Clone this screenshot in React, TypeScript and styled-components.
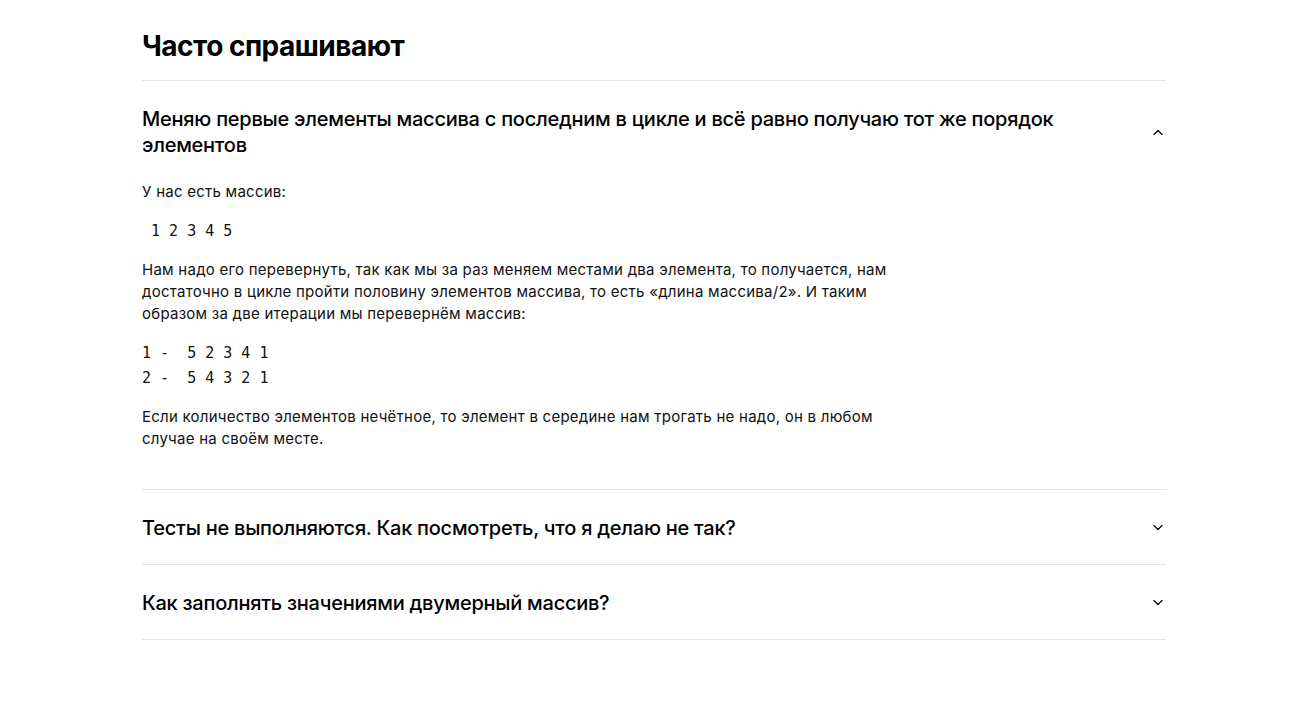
import React, { useState } from 'react'
import styled, { createGlobalStyle } from 'styled-components'

const GlobalStyle = createGlobalStyle`
  body {
    margin: 0;
    padding-left: 7px;
    background: #fff;
    color: #000;
    font-family: 'Inter', 'Roboto', sans-serif;
  }
`

const Container = styled.section`
  max-width: 1024px;
  margin: 0 auto;
  padding-top: 28px;
`

const Title = styled.h2`
  margin: 0;
  padding-bottom: 16px;
  font-size: 28px;
  line-height: 36px;
  font-weight: 700;
  letter-spacing: -0.5px;
  border-bottom: 1px solid #e6e6e6;
`

const List = styled.div``

const Row = styled.div`
  border-bottom: 1px solid #e6e6e6;
`

const Question = styled.div`
  display: flex;
  align-items: center;
  justify-content: space-between;
  gap: 40px;
  padding: 25px 0 23px;
  cursor: pointer;
`

const QuestionText = styled.div`
  font-size: 20px;
  line-height: 26px;
  font-weight: 500;
  max-width: 940px;
  letter-spacing: -0.25px;
`

const Icon = styled.svg`
  flex-shrink: 0;
  margin-right: 3px;
`

const Answer = styled.div`
  max-width: 750px;
  padding: 0 0 39px;
`

const Text = styled.p`
  margin: 0 0 16px;
  font-size: 15px;
  line-height: 22px;
  letter-spacing: 0.25px;
  color: #111;

  &:last-child {
    margin-bottom: 0;
  }
`

const Code = styled.pre`
  margin: 0 0 15px;
  font-family: 'DejaVu Sans Mono', 'Liberation Mono', monospace;
  font-size: 15px;
  line-height: 25px;
  color: #111;
  white-space: pre;
`

type Item = {
  question: string
  answer?: React.ReactNode
}

const items: Item[] = [
  {
    question:
      'Меняю первые элементы массива с последним в цикле и всё равно получаю тот же порядок элементов',
    answer: (
      <>
        <Text>У нас есть массив:</Text>
        <Code>{' 1 2 3 4 5'}</Code>
        <Text>
          Нам надо его перевернуть, так как мы за раз меняем местами два элемента, то получается, нам
          достаточно в цикле пройти половину элементов массива, то есть «длина массива/2». И таким
          образом за две итерации мы перевернём массив:
        </Text>
        <Code>{'1 -  5 2 3 4 1\n2 -  5 4 3 2 1'}</Code>
        <Text>
          Если количество элементов нечётное, то элемент в середине нам трогать не надо, он в любом
          случае на своём месте.
        </Text>
      </>
    ),
  },
  {
    question: 'Тесты не выполняются. Как посмотреть, что я делаю не так?',
  },
  {
    question: 'Как заполнять значениями двумерный массив?',
  },
]

function Chevron({ up }: { up: boolean }) {
  return (
    <Icon width="10" height="6" viewBox="0 0 10 6" fill="none">
      <path
        d={up ? 'M1 5.5L5 1.5L9 5.5' : 'M1 0.5L5 4.5L9 0.5'}
        stroke="#000"
        strokeWidth="1.2"
        strokeLinecap="round"
        strokeLinejoin="round"
      />
    </Icon>
  )
}

function Faq() {
  const [open, setOpen] = useState(0)

  return (
    <Container>
      <Title>Часто спрашивают</Title>
      <List>
        {items.map((item, i) => (
          <Row key={i}>
            <Question onClick={() => setOpen(open === i ? -1 : i)}>
              <QuestionText>{item.question}</QuestionText>
              <Chevron up={open === i} />
            </Question>
            {open === i && item.answer && <Answer>{item.answer}</Answer>}
          </Row>
        ))}
      </List>
    </Container>
  )
}

export default function App() {
  return (
    <>
      <GlobalStyle />
      <Faq />
    </>
  )
}
